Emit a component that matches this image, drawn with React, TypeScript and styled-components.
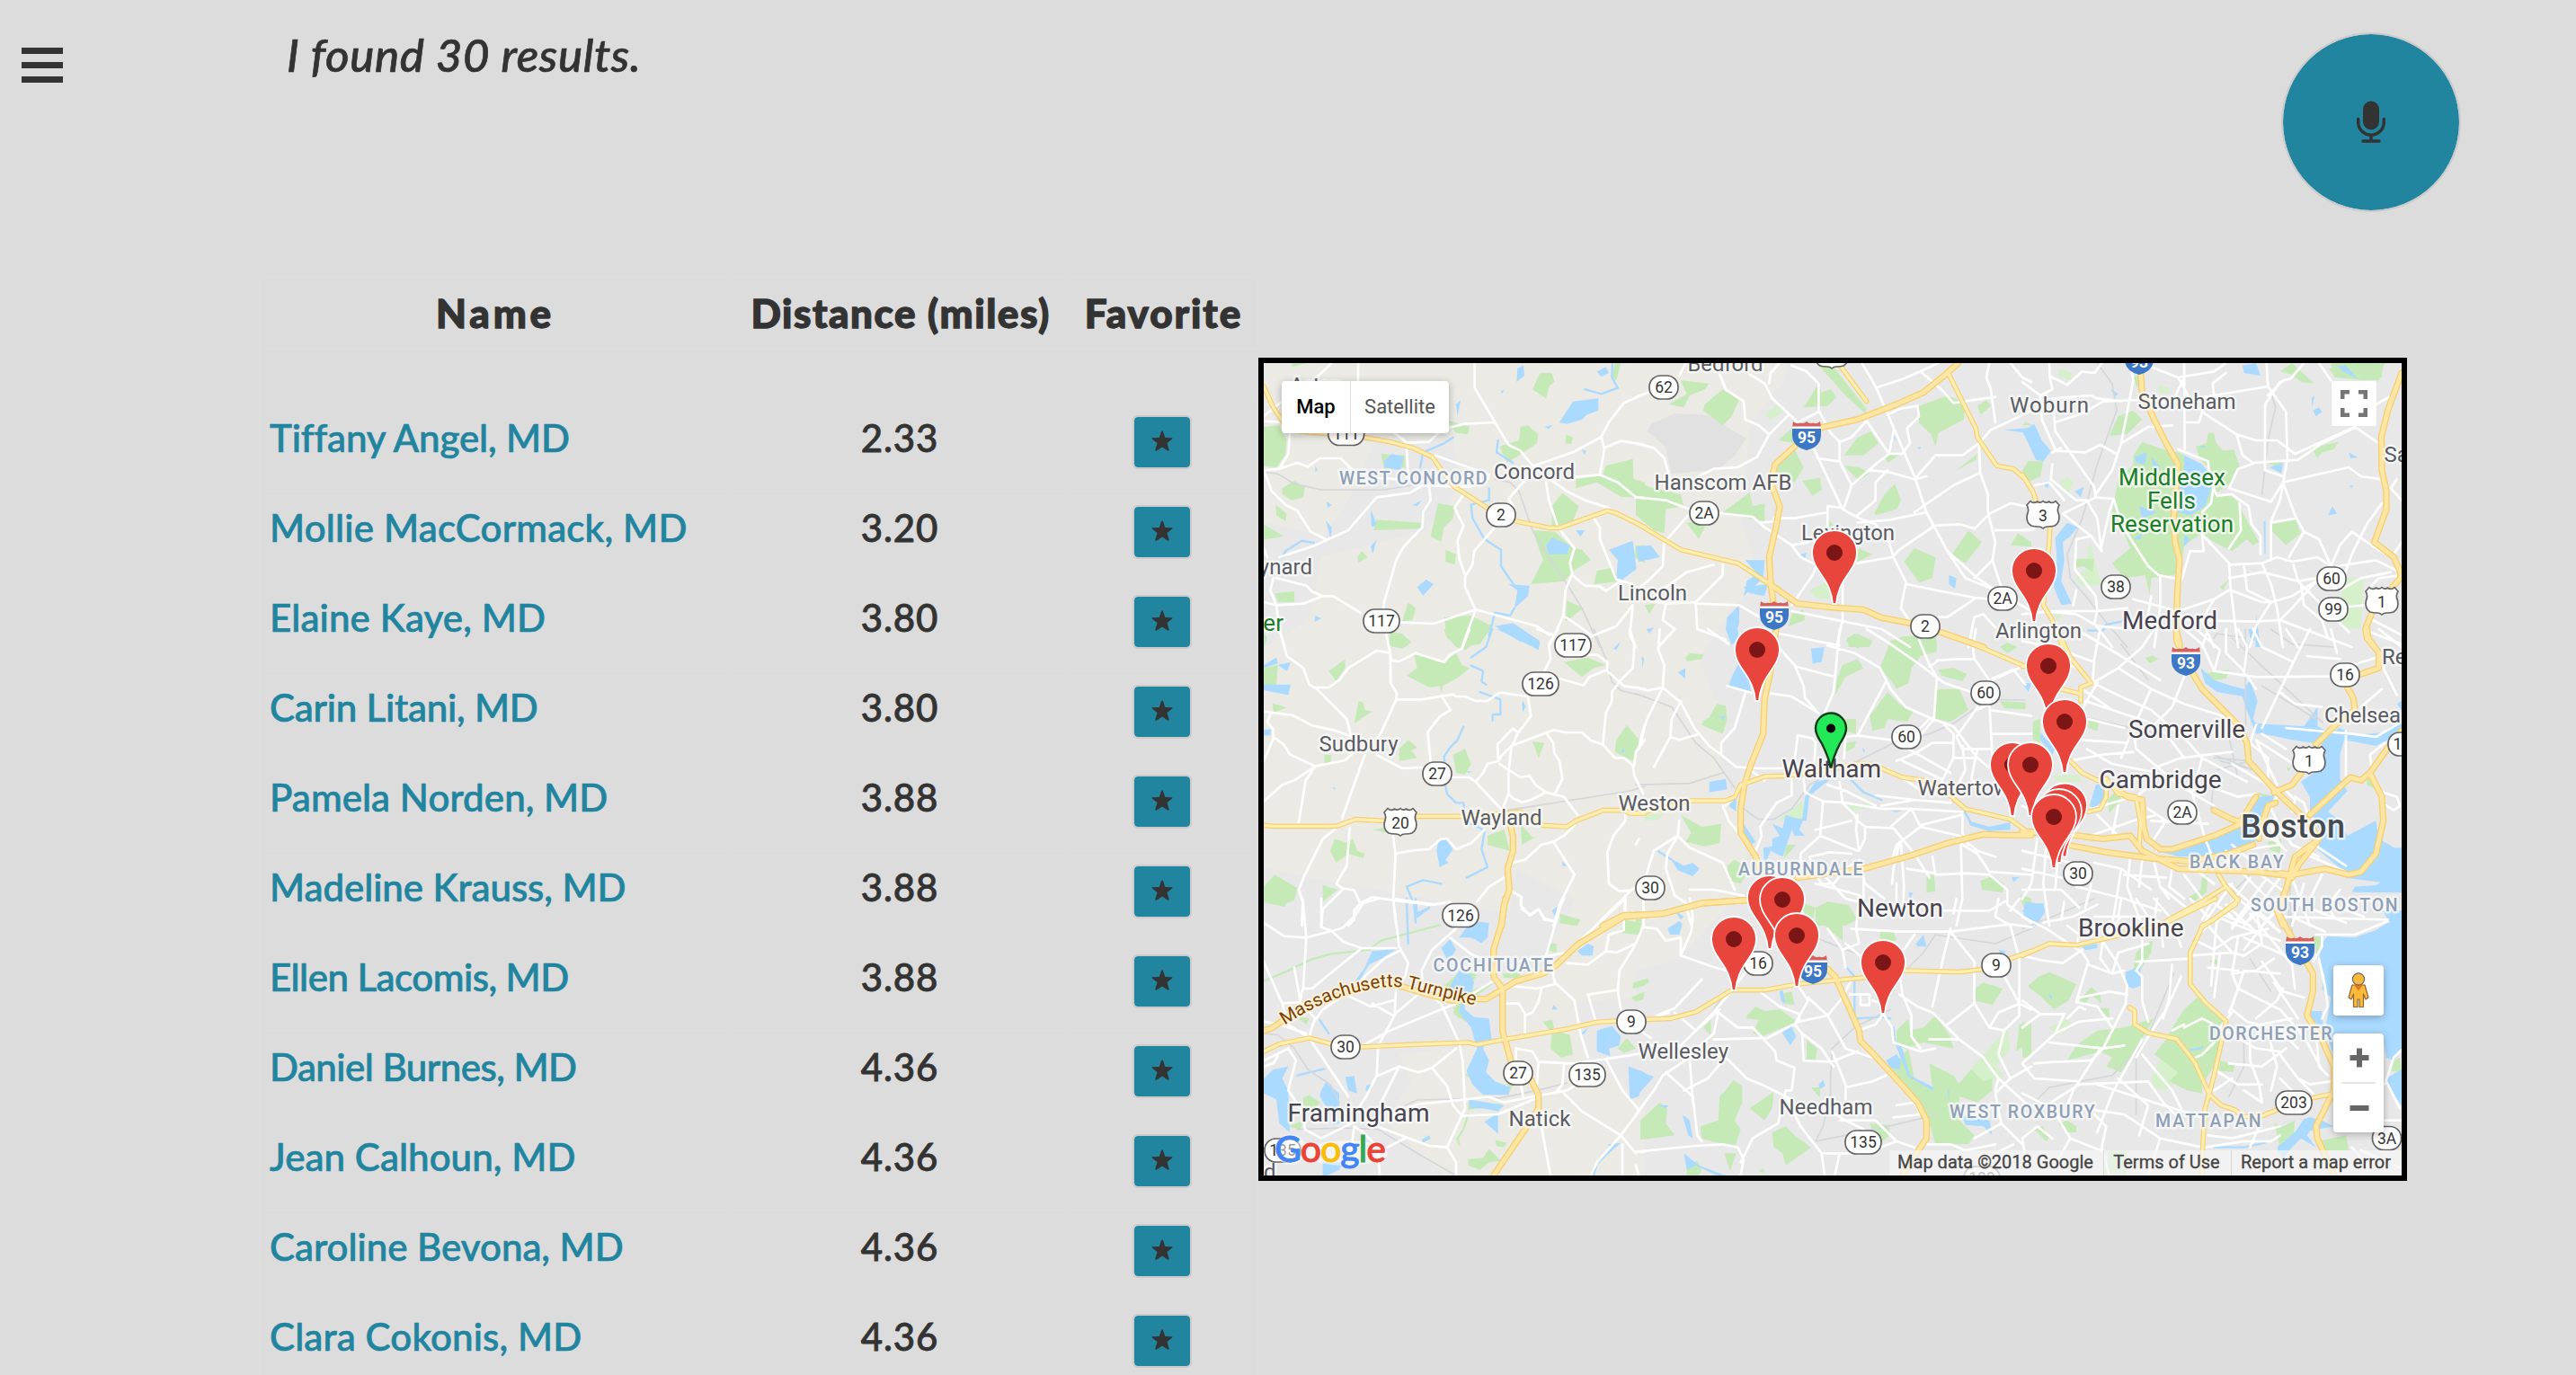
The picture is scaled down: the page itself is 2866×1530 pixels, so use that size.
import React from "react";
import styled, { createGlobalStyle } from "styled-components";

const GlobalStyle = createGlobalStyle`
  *, *::before, *::after { box-sizing: border-box; }
  body { margin: 0; background: #dcdcdc; color: #333; font-family: Lato, sans-serif; }
`;

const teal = "#2185a0";
const ink = "#333333";

/* ---------- page shell ---------- */

const Page = styled.div`
  height: 1530px;
  overflow: hidden;
  background: #dcdcdc;
`;

const Header = styled.header`
  display: flex;
  align-items: flex-start;
  height: 308px;
  padding: 36px 128px 0 24px;
`;

const MenuButton = styled.button`
  display: flex;
  flex-direction: column;
  gap: 9px;
  width: 46px;
  padding: 17px 0 0;
  border: 0;
  background: none;
`;

const MenuBar = styled.span`
  height: 7px;
  background: ${ink};
`;

const Prompt = styled.h1`
  flex: 1;
  margin: -6px 0 0 249px;
  font-size: 51px;
  line-height: 62px;
  font-style: italic;
  font-weight: 500;
  letter-spacing: 0.6px;
  color: ${ink};
  -webkit-text-stroke: 0.7px ${ink};
`;

const MicButton = styled.button`
  display: flex;
  align-items: center;
  justify-content: center;
  width: 200px;
  height: 200px;
  padding: 0;
  border: 2px solid #cbcbcb;
  border-radius: 50%;
  background: ${teal};
  background-clip: padding-box;
`;

const Main = styled.main`
  display: flex;
  align-items: flex-start;
  padding-left: 288px;
`;

/* ---------- results table ---------- */

const Table = styled.div`
  display: flex;
  flex-direction: column;
  width: 1112px;
  border-top: 1px solid #dedede;
  border-left: 1px solid #dedede;
`;

const Row = styled.div<{ $height: number }>`
  display: grid;
  grid-template-columns: 526px 376px 1fr;
  height: ${(p) => p.$height}px;
`;

const Cell = styled.div<{ $align?: string }>`
  display: flex;
  align-items: center;
  justify-content: ${(p) => p.$align ?? "center"};
  border-right: 1px solid #dedede;
  border-bottom: 1px solid #dedede;
`;

const HeadText = styled.span<{ $track: number }>`
  padding: 0 1px 2px 0;
  font-size: 44px;
  line-height: 60px;
  font-weight: 900;
  letter-spacing: ${(p) => p.$track}px;
  color: ${ink};
  -webkit-text-stroke: 1.3px ${ink};
`;

const NameLink = styled.a<{ $track: number }>`
  padding: 0 0 20px 11px;
  font-size: 42px;
  line-height: 52px;
  font-weight: 500;
  letter-spacing: ${(p) => p.$track}px;
  color: ${teal};
  -webkit-text-stroke: 0.7px ${teal};
`;

const Miles = styled.span`
  padding: 0 3px 20px 0;
  font-size: 42px;
  line-height: 52px;
  font-weight: 500;
  letter-spacing: 0.9px;
  color: ${ink};
  -webkit-text-stroke: 0.8px ${ink};
`;

const StarButton = styled.button`
  display: flex;
  align-items: center;
  justify-content: center;
  width: 66px;
  height: 60px;
  margin: 0 4px 10px 0;
  padding: 0 0 2px;
  border: 2px solid #cbcbcb;
  border-radius: 6px;
  background: ${teal};
  background-clip: padding-box;
`;

const doctors = [
  { name: "Tiffany Angel, MD", miles: "2.33", track: -0.1 },
  { name: "Mollie MacCormack, MD", miles: "3.20", track: 0.2 },
  { name: "Elaine Kaye, MD", miles: "3.80", track: 0.16 },
  { name: "Carin Litani, MD", miles: "3.80", track: -0.2 },
  { name: "Pamela Norden, MD", miles: "3.88", track: 0.08 },
  { name: "Madeline Krauss, MD", miles: "3.88", track: -0.05 },
  { name: "Ellen Lacomis, MD", miles: "3.88", track: -0.5 },
  { name: "Daniel Burnes, MD", miles: "4.36", track: -0.5 },
  { name: "Jean Calhoun, MD", miles: "4.36", track: 0.08 },
  { name: "Caroline Bevona, MD", miles: "4.36", track: 0 },
  { name: "Clara Cokonis, MD", miles: "4.36", track: 0.16 },
];

const StarIcon = () => (
  <svg width="24" height="23" viewBox="0 0 22 21" fill={ink}>
    <path d="M11 .3Q11.500 .3 12 1.400L14 7.300 20.800 7.500Q22.200 7.700 21.200 8.700L16 12.900 18 19.600Q18.200 21.200 16.900 20.700L11 16.900 5.100 20.700Q3.800 21.200 4 19.600L6 12.900 .8 8.700Q-.2 7.700 1.200 7.500L8 7.300 10 1.400Q10.500 .3 11 .3z" />
  </svg>
);

const MicIcon = () => (
  <svg width="32" height="48" viewBox="0 0 32 48" fill="none">
    <rect x="7" y="0.500" width="18" height="32" rx="9" fill={ink} />
    <path d="M1.700 20.500V24a14.300 14.300 0 0 0 28.600 0v-3.500M16 38.500v6M7 45h18" stroke={ink} strokeWidth="3.500" strokeLinecap="round" />
  </svg>
);

/* ---------- map ---------- */

const MapFrame = styled.section`
  position: relative;
  width: 1278px;
  height: 916px;
  margin-top: 90px;
  border: 6px solid #000;
  overflow: hidden;
  font-family: Roboto, sans-serif;
`;

const MapCanvas = styled.svg`
  display: block;
  width: 1266px;
  height: 904px;
  background: #e8e8e8;
`;

type Tile = {
  x: number;
  y: number;
  green: string;
  light?: string;
  greenway?: string;
  water: string;
  river?: string;
  rail: string;
  minor: string;
  major: string;
  highway: string;
};

/* Each tile is drawn in its own 1320-unit wide space, three units to a pixel. */
const tiles: Tile[] = [
  {
    x: 1390, y: 390,
    green: "M48,255L100,250 L125,300 L120,350 L90,390 L48,385z M440,345L520,350 520,390 450,400z M110,460L150,435 185,455 180,490 140,500 110,480z M88,515L125,545 120,570 90,550z M48,580L115,620 48,632z M630,510L685,520 680,560 650,590 640,640 605,620z M415,600L425,565 575,575 570,595z M360,690L375,670 395,690 365,708z M655,665L690,680 685,715 655,705z M665,235L735,255 730,280 690,275z M970,75L1010,75 1018,105 1000,120 990,160 945,130z M905,255L930,250 965,280 960,310 900,350 860,375 835,320 900,300z M1058,280L1080,290 1075,312 1055,310z M1090,430L1180,415 1190,385 1280,362 1282,430 1320,440 1320,492 1240,488 1160,440 1090,460z M1010,520L1045,475 1100,520 1080,570 1010,590z M945,600L1020,605 1080,660 1110,665 1140,700 1090,730 1050,770 940,780 980,700z M1160,735L1210,725 1240,770 1150,780z M530,840L555,860 545,900 510,905z M470,935L540,970 520,990 470,985z M650,890L740,885 810,920 770,980 700,990 660,960z M85,810L150,805 150,840 95,840z M1060,835L1115,860 1055,905z M1290,650L1320,650 1320,710 1285,690z M48,940L60,960 48,990z M140,42L190,42 145,55z M1220,42L1240,42 1225,100 1210,90z",
    water: "M450,370L475,345 515,355 505,400 450,390z M1035,240L1080,170 1165,160 1165,200 1125,215 1110,230 1060,245z M990,650L1010,625 1070,650 1060,680 1000,680z M1200,665L1280,635 1292,730 1245,765 1225,760 1230,700z M560,790L590,765 615,780 580,818z M865,780L935,785 930,820 885,860 895,800z M895,60L915,50 918,85 892,105z M1160,70L1190,55 1200,75 1175,88z M690,180L705,165 695,220z M405,530L425,580 408,590z M1090,600L1120,600 1105,622z M820,920L880,910 970,970 960,990 900,970z M220,385L228,400 220,405z M258,505L275,515 262,525z M255,568L275,590 272,630z M545,515L575,500 560,520z M405,655L425,630 412,680z M220,885L240,895 218,905z M1108,330L1125,335 1118,348z M840,135L852,132 842,145z M985,255L1012,248 1000,262z",
    river: "M740,515L745,560 785,630 840,665 840,720 885,785 M1212,42L1210,90 1230,125 1175,145 1120,130 M110,690L120,670 175,635 215,642 M830,300L825,340 880,375 M885,860L870,885 820,875 800,950 M800,460L800,500 740,515 M570,390L580,340 650,310 680,290",
    rail: "M48,405L95,412 150,445 240,465 450,465 600,440 M820,430L870,440 900,470 945,600 1000,690 1060,780 1110,860 1170,990",
    minor: "M48,400L100,395 160,375 195,388 235,360 305,360 340,395 420,425 500,430 M48,400L75,470 120,515 160,535 205,605 255,630 M100,395L130,345 135,276 M100,690L130,680 220,650 330,600 425,490 535,475 580,450 680,455 740,455 800,425 M600,455L605,500 580,540 578,590 515,655 490,700 450,840 448,862 M715,480L685,525 715,585 695,635 700,690 720,750 720,790 755,865 M820,590L750,670 745,715 720,755 M504,908L615,912 755,865 830,885 960,920 1000,950 M755,865L710,990 M752,42L752,125 820,240 865,315 905,335 950,390 M664,258L720,245 820,240 M950,385L1080,340 1175,288 1200,240 1250,175 1320,145 M1175,288L1185,330 1170,415 1090,422 M1185,325L1240,302 1320,315 M1170,415L1230,440 1290,490 1320,492 M950,390L1060,470 1120,500 1200,525 M990,440L1000,500 1030,590 1085,660 1070,710 1078,745 1055,800 1048,885 1000,990 M950,400L865,495 885,525 M1150,560L1170,590 1170,630 1225,765 1280,780 M1078,750L1120,785 1170,788 1190,802 1240,770 M1280,850L1225,920 1140,955 M1280,850L1270,950 1290,990 M1048,885L1100,920 1140,950 M620,350L800,415 M525,330L530,410 M485,276L525,308 600,305 630,276 M48,235L108,240 M80,760L70,800 90,850 180,845 245,820 280,820 370,875 M90,760L190,785 210,805 245,820 M48,840L90,850 100,930 118,990 M60,690L48,660 M275,42L230,85 M363,42L363,102 M48,220L108,170",
    major: "M48,120L80,190 120,250 170,270 230,275 385,290 470,305 545,325 610,355 645,405 685,455 800,530 M890,570L1000,592 1035,592 1195,535 1225,543 1320,590",
    highway: "",
  },
  {
    x: 1820, y: 390,
    green: "M110,180L170,145 150,100 245,110 230,130 180,150 160,190z M230,180L290,130 345,165 320,220 290,250 225,200z M610,50L660,55 770,195 765,210 700,150z M560,190L610,110 620,140 650,130 670,155 640,185z M475,300L520,260 530,310z M490,360L530,330 560,390 530,440 480,410 460,400z M555,435L615,425 620,465 590,485z M695,350L740,290 785,270 810,310 760,350z M695,385L750,390 780,410 745,435z M945,185L1040,150 1100,175 1095,230 1010,275 1000,320 985,280 945,240z M795,545L830,480 865,445 885,500 870,530 800,550z M830,350L885,345 840,375z M1070,400L1140,345 1135,365z M0,440L60,460 150,480 160,520 100,530 95,610 60,600 0,550z M290,540L380,475 390,520 430,510 430,570 300,545z M170,575L240,570 210,630z M895,705L930,660 1000,690 990,760 945,775z M1055,680L1110,600 1155,640 1100,710z M740,660L790,680 740,705z M640,560L660,585 640,590z M705,960L740,945 790,970 780,990 710,990z M520,880L560,865 565,900 510,920z M1250,650L1275,610 1320,640 1320,655z M1140,185L1170,165 1185,185 1150,215z M30,850L65,845 45,880z M940,990L1000,930 1005,990z",
    light: "M430,215L480,175 500,200 450,230z M580,800L640,770 650,830 600,825z",
    water: "M365,700L430,700 425,760 360,820 370,770 405,745z M305,890L345,850 345,910 320,985 300,930z M0,655L50,650 80,690 10,705z M1045,750L1070,760 1065,795 1045,780z M550,680L570,675 565,695z M1230,265L1320,258 1320,290 1300,275z M35,930L60,925 45,945z M860,280L870,300 862,295z M938,325L952,320 948,330z M360,790L440,780 430,820 380,810z",
    rail: "",
    minor: "M0,155L42,140 M280,80L300,130 360,170 365,230 410,250 445,280 M165,45L145,85 M380,80L430,110 455,160 525,225 540,240 M445,110L450,75 480,42 M445,280L510,215 M445,280L405,355 340,390 260,395 210,420 M520,50L570,70 610,110 610,200 650,275 680,305 M540,240L610,205 M755,42L800,120 840,210 930,420 970,540 1040,670 1100,760 1200,800 M680,305L720,290 770,235 835,330 845,345 890,345 M680,305L680,370 605,360 M595,330L690,530 745,560 800,580 845,640 860,690 905,780 M680,370L720,450 695,525 640,520 640,585 M720,450L800,380 845,345 860,270 M740,550L800,500 800,440 840,400 M780,400L840,405 930,430 1000,350 1090,350 1145,310 M890,345L915,310 905,260 945,220 940,185 880,195 840,215 M800,125L890,95 950,70 1010,42 M950,70L1020,130 1060,175 1200,155 M1180,42L1170,90 1185,130 1200,240 M1145,310L1185,265 1240,240 1320,200 M1145,315L1150,410 1175,480 1175,540 1200,640 1190,700 1220,790 M970,540L850,565 740,575 M640,540L530,560 460,560 M990,585L1080,580 1130,595 1180,545 1250,510 1305,520 M930,430L970,420 M990,590L880,665 855,690 740,710 M930,540L1060,450 1145,410 M0,490L100,500 180,530 M278,543L390,555 430,590 520,650 550,690 590,710 640,710 M0,310L60,325 95,360 120,450 M520,650L575,640 M520,850L590,750 610,700 M690,780L690,900 670,990 M420,575L470,570 M180,545L95,640 90,720 40,770 0,800 M260,715L170,740 100,790 50,835 M290,715L290,750 200,840 100,845 50,835 M200,845L205,930 300,965 M200,845L345,850 430,900 M100,845L90,900 130,930 75,990 M480,945L680,985 M520,870L620,890 820,930 915,990 M900,780L885,860 915,905 M905,780L1000,800 1130,825 1180,830 M1040,670L1140,760 1200,800 1320,870 M1130,830L1040,890 1010,890 M1200,600L1320,600 M1190,700L1130,760 M1110,990L1130,890 1160,880 1200,925 M1250,42L1290,90 1320,105",
    major: "M685,55L770,170 M0,575L150,665 340,710 440,775 M1045,80L1135,260 1140,290 1205,385 1260,395 1300,430 1320,465",
    highway: "M615,258L740,230 870,180 960,140 1040,75 1075,42 M530,320L465,380 450,440 480,520 470,580 445,690 450,780 460,850 M440,775L540,845 660,858 760,865 820,892 915,910 M1015,940L1160,990",
  },
  {
    x: 2250, y: 390,
    green: "M400,305L470,330 520,340 560,360 600,380 640,450 650,490 690,480 725,510 735,540 790,640 770,650 750,630 700,670 640,640 600,610 540,650 530,740 500,750 430,760 425,815 410,750 340,760 300,710 360,660 340,610 300,540 320,430 370,380 370,350z M620,275L640,275 645,305 670,335 705,330 725,385 700,440 640,480 630,400 590,360 580,320 615,310z M370,200L400,230 350,280 290,285 320,220z M20,370L70,370 60,420 20,440 0,400z M1020,60L1200,42 1200,90 1140,100 1050,90z M900,42L975,110 930,105 900,80 860,70z M965,325L1055,305 1040,330 1000,340 985,360z M830,580L910,560 930,610 880,650 830,600z M820,375L870,370 860,395z M180,695L240,695 235,740 205,720 180,725z M0,250L10,240 40,250z M660,790L690,765 670,800z M390,80L385,130 370,90z M1030,42L1210,42 1190,100 1040,90z",
    light: "M120,60L170,75 160,100 120,85z M455,115L490,125 490,145 455,140z M125,440L150,420 170,440 150,480z M1080,760L1140,760 1130,930 1080,925 1040,890z M100,860L135,870 120,905z M215,660L230,645 240,700 265,780 200,790 180,760 220,720z",
    water: "M0,270L40,245 65,300 95,335 70,370 45,365 20,310z M375,355L415,340 410,380 380,375z M540,350L600,380 640,430 610,520 560,550 520,540 500,470 540,420z M430,355L440,400 460,390z M60,440L90,435 85,460z M175,470L205,455 195,490z M110,625L150,575 185,590 160,620 135,640 140,700 130,770 165,845 130,850 105,790 115,700z M735,50L780,42 795,85 740,75z M1050,50L1080,50 1120,95 1070,70z M970,200L990,190 1000,205 980,220z M965,160L975,150 968,190z M1020,550L1035,520 1050,545z M1090,340L1120,358 1095,360z M825,390L870,375 865,410z M295,130L320,145 310,155z M540,615L560,630 540,655z M390,520L450,540 400,560z M370,630L400,610 395,630z M780,880L795,990 778,990z M805,570L812,570 812,680 808,680z M1090,452L1105,450 1100,458z M595,318L615,320 600,325z",
    river: "M220,935L270,935 280,915 330,905 350,890",
    rail: "M250,42L300,110 315,200 250,380 200,560 150,680 160,760 220,830 290,920 350,990 M830,140L845,190 820,300 800,480 M640,960L650,945 740,960",
    minor: "M90,42L92,90 100,130 60,150 65,230 110,330 M0,105L60,150 M92,85L150,115 200,70 240,75 265,42 M360,42L370,100 330,310 300,400 245,480 M100,160L230,150 250,160 330,170 M105,200L110,270 180,370 240,455 245,490 M110,240L200,210 270,170 400,165 M110,335L210,340 260,315 315,345 M330,310L420,255 500,250 M130,325L100,340 M245,490L305,495 330,580 420,720 455,750 530,765 M245,490L135,545 230,620 265,670 250,560 215,500 M305,495L290,540 265,650 M230,620L180,630 175,730 245,820 250,870 M100,380L95,430 180,500 215,500 M40,450L90,440 140,500 M0,600L40,595 M400,100L390,165 500,175 540,90 M430,55L520,90 640,70 680,42 M520,90L570,180 600,200 M540,42L542,330 M470,175L640,150 820,120 M640,150L635,110 680,75 M815,42L820,120 880,205 885,360 860,500 830,570 830,700 M860,105L810,180 810,400 870,420 M600,205L715,280 780,300 850,300 910,345 1110,255 1190,310 1195,350 M600,205L590,240 540,240 M715,280L735,350 770,375 920,365 1000,310 1110,258 M770,378L720,395 690,460 830,505 M830,505L870,440 1090,390 1130,420 1200,430 M520,330L620,370 625,430 650,485 700,480 755,520 765,580 795,620 795,680 M640,440L630,510 600,540 M725,510L730,600 690,660 M600,615L605,670 560,670 530,770 M600,615L690,710 695,790 720,990 M690,715L800,710 850,690 900,705 985,690 1030,720 M870,440L910,550 940,605 990,630 1040,740 M940,605L890,690 M830,575L915,560 M1030,720L1060,650 1100,605 1180,660 1250,700 M1200,510L1150,580 1100,680 1060,790 M905,715L920,770 1000,850 1090,940 M690,760L800,740 880,760 920,770 980,760 M800,710L830,780 850,860 870,990 M740,720L750,800 830,840 900,820 980,770 M695,800L800,840 830,840 780,920 760,990 M460,750L460,860 440,990 M0,880L100,870 250,870 350,860 M370,830L520,870 640,830 690,800 M430,820L420,880 M640,830L600,900 640,990 M550,900L780,905 860,900 1020,960 M250,870L240,910 300,990 M70,870L180,880 250,920 360,930 M180,800L170,850 M1150,800L1190,760 1266,750 M1060,800L1130,760 1230,740 M930,780L940,850 1000,900 1020,960 M990,760L900,860 860,900 M1090,855L1140,850 M1020,960L1100,990 M1180,180L1235,150 M990,42L1030,100 M820,150L870,100 895,95 940,42 M1250,430L1230,460 1266,500 M1266,640L1240,680 M1050,720L1180,700 1260,740 M1170,900L1266,950 M1160,940L1266,980",
    major: "M0,415L35,470 45,500 M92,590L90,640 70,850 100,900 135,990",
    highway: "M395,80L400,140 440,230 480,310 520,380 510,500 505,560 510,640 525,700 518,800 513,920 515,970 525,990 M1266,75L1220,200 1198,290 1200,400 1215,470 1215,530 1175,640 1240,690 1262,740 1262,760 1235,790 M1165,880L1145,930 1150,960 1175,990",
  },
  {
    x: 1390, y: 700,
    green: "M470,10L510,15 540,45 510,65 465,55z M650,0L730,0 790,20 720,70 690,60 655,20z M550,85L600,95 650,110 690,80 710,120 735,130 700,160 645,190 642,215 636,190 600,195 525,155 560,130z M265,140L320,100 320,130 290,175z M365,240L380,245 385,270 410,275 350,315z M78,248L125,262 80,280z M500,400L530,370 560,395 540,405 560,430 500,440z M680,420L720,400 740,450 720,485 690,480z M250,420L275,420 270,450 250,445z M270,740L285,700 330,715 345,700 360,740 385,750 380,765 330,750 290,780z M410,670L470,660 480,685z M795,690L850,670 870,740 795,720z M905,650L950,700 960,690 910,720z M945,375L985,380 965,430z M1260,320L1300,370 1280,440 1220,410 1225,370z M1050,110L1130,95 1190,120 1150,130 1110,160z M48,860L85,820 160,865 150,905 110,920 48,910z M245,855L295,870 245,910z M48,130L95,120 90,190 48,185z M1040,955L1100,970 1080,990 1035,980z M1210,570L1240,590z",
    water: "M825,0L880,5 970,45 965,70 890,30z M48,120L90,95 95,115 48,130z M95,120L138,110 125,140z M48,185L138,185 130,220 48,205z M910,250L918,245 915,275z M630,710L655,700 680,735 655,770 665,780 635,795 625,740z M48,335L72,335 70,355 48,355z M1215,65L1240,40 1225,70z M1240,410L1250,395 1250,415z M1045,775L1058,790 1045,792z M275,528L288,530 285,537z M725,475L745,475 730,480z M1015,935L1028,925 1022,960z M910,250L914,240 922,258 914,278z",
    river: "M810,0L790,60 740,95 M740,122L780,140 775,175 790,185 M770,210L838,235 838,285 812,285 812,305 M715,325L695,370 670,395 650,425 655,470 M655,525L660,550 690,580 715,580 720,640 780,670 M785,675L775,735 795,795 725,830 M640,850L580,838 525,860 550,920 555,980 M560,950L600,930",
    rail: "M1150,0L1190,100 1210,175 1240,205 1320,225 M860,605L1270,540 1320,525",
    minor: "M100,0L125,90 180,130 200,185 225,200 325,300 340,360 M225,195L265,195 300,170 330,130 425,72 470,80 475,105 500,108 555,80 650,110 670,85 710,65 735,0 M457,18L470,80 472,180 492,215 490,235 440,345 425,370 M490,235L575,235 680,218 690,225 720,225 755,240 795,240 835,212 930,225 940,290 895,350 880,385 M640,222L672,270 635,292 595,345 605,440 M48,275L145,288 210,322 285,338 345,360 M70,285L60,310 80,335 80,360 115,385 135,418 220,458 320,438 345,415 M48,440L80,365 M48,575L110,520 150,505 220,458 188,505 165,645 M425,420L510,465 575,462 M678,495L735,495 755,510 840,600 M755,510L780,480 795,450 832,440 840,425 875,390 940,365 1015,337 1055,345 1110,345 1140,372 1180,385 1220,430 1250,430 1280,455 1285,490 1315,550 M832,440L828,385 880,332 895,345 M835,450L905,495 935,490 955,520 990,545 1050,560 1095,620 M990,345L1015,380 1018,415 1035,440 1045,500 1020,550 M875,390L865,480 865,550 845,600 M865,550L880,565 910,578 940,570 990,545 M1180,385L1190,280 1210,240 1210,210 1240,170 1280,130 1285,50 1270,0 M1035,165L1115,188 1135,160 1195,135 M1110,85L1160,85 1195,110 1195,140 1250,190 1320,200 M985,140L1005,100 1000,50 1030,0 M960,0L1010,18 M385,420L310,630 M290,665L245,700 185,820 165,870 178,910 175,990 M335,665L325,790 290,850 310,865 350,872 370,915 M370,915L410,895 480,905 600,920 650,915 M370,915L350,940 350,970 330,990 M310,870L245,935 240,990 M480,690L488,755 480,905 490,990 M488,750L550,738 600,735 640,700 660,700 690,735 740,715 785,670 M760,910L800,860 850,830 M880,780L920,770 975,720 1015,710 1050,690 1085,655 M1015,710L1085,820 1035,920 1015,990 M1255,620L1255,640 1215,690 1195,745 1200,850 1235,875 1275,872 1290,860 M1275,872L1160,985 M1255,890L1255,960 M875,875L910,895 905,920 935,955 965,935 985,965 1020,975 M48,980L60,990 M1305,390L1320,320 M1285,455L1290,410 1320,370",
    major: "M48,655L80,658 290,658 355,635 450,640 M560,625L710,625 860,615 900,610 950,630 980,655 1060,660 1090,640 1180,605 1250,605 1270,615 1320,615",
    highway: "M870,650L880,690 880,740 862,800 868,870 850,920 842,990 M1180,990L1250,955 1320,955",
  },
  {
    x: 1820, y: 700,
    green: "M165,95L180,80 225,85 220,100 170,108z M270,250L300,255 305,300 290,350 220,320 225,305 245,295z M700,40L730,15 790,40 740,65z M670,170L690,120 740,100 760,130 700,160 665,220z M815,130L850,40 890,25 1000,20 1005,75 950,90 920,130 910,180 870,200 850,170z M780,290L840,210 880,250 930,270 905,310 840,300 830,330 790,340z M1000,200L1080,200 1110,270 1050,310 1000,300z M1010,135L1060,130 1105,150 1090,175 1020,155z M1215,60L1240,45 1275,60 1240,80z M700,300L735,300 735,350 700,340z M700,380L735,375 730,395 700,410z M500,720L535,720 495,765z M150,620L220,660 285,650 280,715 230,725 165,710 185,680z M305,790L330,770 380,800 350,850 310,840z M970,825L995,820 1000,875 970,880z M1150,840L1190,825 1230,850 1225,880 1155,870z M600,930L640,910 700,925 740,970 700,990 600,990z M1215,240L1300,245 1300,268 1230,265z M0,380L10,360 8,400z M0,965L20,970 10,990 0,990z M1285,885L1320,900 1320,930 1290,920z",
    light: "M475,640L560,570 560,635z M710,590L790,580 795,595 710,610z M30,620L90,615 80,635 30,640z",
    water: "M300,0L340,0 345,40 320,50z M320,160L345,110 375,160 385,210 310,190z M585,65L630,60 620,110 590,115z M140,145L165,130 165,165z M245,510L300,500 305,535 245,545z M310,590L335,560 335,610z M360,650L400,710 385,720 360,690z M425,730L455,725 455,700 480,690 455,650 490,665 500,620 530,630 560,635 545,670 565,690 530,690 520,670 490,760 450,740 430,790z M115,765L160,790 190,780 213,800 190,825 140,805z M565,560L600,510 650,500 600,540 578,560 570,640 555,640z M1110,640L1180,660 1250,645 1250,670 1180,675 1115,655z M280,290L300,290 290,305z M850,605L885,605 870,612z M910,880L925,880 915,900z M1290,940L1320,930 1320,975z M1255,828L1280,828 1260,845z M20,90L28,100 22,130z M755,395L765,405 760,412z M130,940L160,960 150,970z",
    river: "M75,742L120,770 M720,505L760,545 820,570 M1098,610L1115,640",
    rail: "M0,215L120,260 200,380 260,430 330,530 M0,520L180,515 290,480 M360,600L410,635 460,635 520,600 580,520 650,480 740,440 860,380 980,350 1060,315 1140,260 M1190,235L1300,237",
    minor: "M80,0L75,70 95,120 90,195 40,295 20,350 10,400 M0,195L40,205 90,195 150,245 195,330 245,390 285,420 335,460 410,465 490,465 M150,240L120,300 115,360 145,370 210,350 M115,360L60,460 M285,420L285,380 330,330 365,215 M305,190L385,212 M450,215L520,225 610,280 M480,65L530,120 560,190 565,230 600,270 M240,0L310,50 M535,125L665,160 660,210 630,280 M680,0L665,160 M640,55L730,80 815,130 850,200 900,260 990,300 1060,325 1140,430 M770,0L850,50 950,120 1030,180 1120,210 M945,35L980,120 1005,160 995,300 930,380 M740,355L850,370 M740,355L835,175 M980,300L950,330 M1005,105L1070,100 1130,100 1180,170 M980,125L1010,105 M1130,100L1125,60 1135,0 M1190,165L1260,135 1300,185 M1300,120L1190,170 M740,355L700,360 695,430 M540,355L535,400 525,470 M540,355L590,365 600,380 595,450 M380,470L430,505 M520,500L520,555 470,580 415,660 420,690 400,740 M560,500L565,545 625,575 700,580 820,600 920,600 1090,610 M625,575L615,690 550,750 550,790 M680,510L690,580 730,620 740,640 765,660 860,665 930,750 980,830 M640,520L700,540 800,590 M615,690L740,740 M740,620L735,670 745,740 765,700 765,660 M820,590L930,570 1050,580 M800,555L930,570 M920,600L950,660 870,720 855,770 M950,655L1090,620 M850,660L920,600 M1090,625L1090,680 1110,720 M950,660L1080,690 1140,740 1200,760 M1060,700L1140,750 1180,810 1320,820 M885,710L895,860 890,960 M880,710L860,800 855,850 M990,760L1000,820 1100,815 1180,820 M905,800L1000,815 M1085,720L1090,900 1070,990 M1180,820L1240,870 1240,920 1320,980 M1030,320L1060,350 1060,430 1000,550 M1060,380L990,380 940,410 870,440 M910,400L1050,480 M890,440L1020,500 M840,465L970,550 M1060,430L1140,430 1200,480 M1090,390L1100,470 1050,570 M1140,270L1180,250 1190,420 M1185,350L1320,350 M1140,260L1070,360 1090,400 1190,400 M1180,270L1320,290 M1140,400L1120,500 1170,560 M745,770L765,850 830,900 M600,850L680,870 750,890 M580,790L620,850 660,850 700,800 730,780 M590,800L580,760 650,745 720,750 M635,830L700,900 740,910 M10,700L0,720 M145,640L140,690 180,730 290,780 330,870 M140,690L105,750 100,800 130,890 175,920 M140,690L60,740 35,820 M25,905L25,990 M180,870L260,870 360,890 M170,930L185,990 M290,590L310,640 360,700 400,740 M300,590L340,530 M1030,940L1180,940 1240,905 M760,840L760,900 M870,850L870,920 M720,640L600,670",
    major: "M0,615L80,600 180,573 300,573 330,560 350,520 380,510 430,492 500,490 600,475 740,450 790,452 890,495 960,505 1030,540 1100,600 1250,635 1300,672 M1015,10L1150,60 1300,125",
    highway: "M468,0L450,140 430,230 425,350 385,450 362,520 350,600 350,680 400,760 420,820 M0,955L90,950 220,915 370,905 M540,830L760,800 920,755 1040,715 1160,685 1250,688 1320,688",
  },
  {
    x: 2250, y: 700,
    green: "M605,150L690,135 680,165 640,170z M410,95L435,88 455,100 425,115z M220,300L255,310 250,340 220,330z M285,570L320,530 330,570 290,615z M820,710L865,700 860,750 825,735z M550,900L595,870 600,830 620,820 615,880 570,910z M1150,500L1170,500 1190,540 1150,520z M35,310L60,300 60,380 35,370z M885,460L897,465 885,475z M780,545L830,555 800,560z",
    light: "M100,490L190,485 195,510 120,510z",
    water: "M1060,340L1075,365 1060,420 1060,500 1085,540 1020,610 1060,640 1085,690 1180,640 1190,700 1266,745 1266,880 1100,878 1110,860 1180,855 1195,845 1080,830 1050,790 985,735 1000,690 960,600 960,560 930,510 985,470 1010,430 1000,380 1030,340z M785,315L940,325 985,260 985,325 1030,345 1060,330 1110,355 1200,345 1266,300 1266,340 1220,370 1180,390 1075,370 1000,385 900,370 830,355 795,350z M595,130L640,170 700,190 740,200 760,170 785,240 770,300 800,345 780,350 745,260 735,225 650,210 610,180z M755,0L785,0 775,40 760,30z M455,740L540,735 610,705 720,655 760,600 790,560 840,555 830,590 800,610 790,700 720,740 620,760 520,760z M245,520L285,510 280,560 240,600 225,590z M60,345L110,400 100,420 60,370z M0,180L30,180 20,210z M10,910L70,920 75,945 45,990 10,970z M1210,940L1266,940 1266,990 1230,990z M1130,735L1266,730 1266,880 1150,800z M1266,240L1250,250 1266,270z",
    rail: "M745,0L745,370 M330,50L420,170 M640,430L760,440 650,470 M100,270L500,360 M700,30L1000,310 M800,190L980,300 M690,360L720,500 M640,500L630,600 M830,0L900,50 1040,60 M700,880L760,820 M895,860L885,990 M880,850L895,990 M640,420L770,470 660,440",
    minor: "M0,40L100,60 240,110 M180,0L330,90 460,170 M260,0L240,100 235,180 320,130 400,60 440,0 M100,90L200,140 235,180 M235,180L340,230 430,270 520,350 M200,200L300,270 420,310 480,350 M320,130L430,200 540,250 700,300 M430,200L370,330 330,430 M540,160L500,260 430,330 M250,180L180,300 M210,240L330,280 M220,300L340,330 M200,370L350,380 M215,400L300,450 450,480 M160,440L260,420 370,410 M370,340L380,400 450,460 520,520 640,590 M450,460L530,430 700,410 M480,350L540,430 M520,340L600,430 750,510 M540,0L600,50 640,140 M580,0L660,70 640,140 M620,0L600,60 M680,0L680,80 740,140 M720,0L750,60 740,150 M640,140L780,160 1030,158 M745,150L780,200 M905,110L800,330 M770,0L800,60 905,110 960,0 M1030,0L1050,80 M950,90L1060,100 M880,0L920,60 M640,530L720,560 780,550 M560,520L610,700 630,750 M700,450L820,520 M600,430L570,540 M780,370L850,520 M780,370L920,460 M800,350L880,400 M780,320L760,380 820,430 820,520 M860,210L910,250 1000,260 M880,330L1100,350 1180,360 1266,310 M1080,340L1080,490 M1170,490L1160,420 1210,380 M1100,120L1200,90 M1190,100L1250,220 M1190,0L1266,60 M1130,260L1200,200 M1190,540L1250,560 1260,590 1240,605 1200,580 M910,560L940,580 950,610 M880,540L910,570 900,610 M850,560L830,600 850,640 M780,670L850,710 880,740 M820,640L860,720 M720,740L860,720 M680,740L690,780 M860,660L900,720 990,760 M700,720L770,780 M920,740L1080,810 M960,710L1080,790 M450,740L440,720 400,680 M0,590L100,640 160,680 M200,700L370,640 450,620 M230,600L370,560 M250,620L330,700 M320,590L300,690 M380,560L430,520 M430,640L620,650 M420,600L480,640 440,700 M0,740L200,790 M50,700L30,850 0,900 M80,720L70,850 90,990 M120,740L110,870 M0,800L130,830 M0,870L130,870 190,930 M240,780L330,800 300,990 M180,860L340,900 460,940 M360,760L350,860 400,990 M400,770L390,860 M440,780L460,860 490,900 M340,820L480,830 M460,860L560,940 M330,800L430,870 M230,850L210,930 M500,800L490,860 540,900 M540,820L600,900 M560,790L640,850 M240,960L440,960 M450,900L440,990 M620,900L700,960 M600,990L700,850 M650,980L760,830 M700,990L810,840 M740,990L860,830 M690,850L840,990 M740,820L840,920 M660,950L760,990 M780,810L880,880 M880,900L1080,980 M940,850L900,990 M900,830L960,990 M1000,820L960,900 M1060,870L1000,950 M800,990L880,910",
    major: "M160,95L230,180 195,195 195,240 M115,0L135,40 160,95 M130,200L190,215 M0,125L15,120 M160,440L200,480 250,505 280,500 320,550 380,560 395,650 390,720 M280,500L280,560 260,600 220,610 M655,820L680,860 600,910 480,975 M680,860L720,905 640,970 600,990",
    highway: "M513,0L525,50 M570,150L600,200 720,320 750,380 755,440 850,545 930,620 960,650 990,700 M960,620L1095,495 1130,505 1160,480 1225,390 1266,340 M1160,480L1200,560 1205,640 1180,750 1130,810 1090,820 1010,800 900,820 860,815 M0,675L60,680 170,688 270,700 360,690 400,740 520,800 660,805 780,810 900,825 M150,720L280,745 430,765 560,775 690,750 770,720 M310,530L350,560 400,570 405,660 415,700 460,735 500,735 640,690 730,650 M730,640L780,560 M640,605L700,635 730,645 M845,580L820,590 790,680 790,700 M840,545L900,520 930,480 M980,385L1050,315 1110,270 1105,230 1085,195 M1130,150L1190,130 1190,80 1155,30 1150,0 M990,700L910,760 880,870 850,940 870,990 M990,700L920,790 900,830",
  },
  {
    x: 1390, y: 1000,
    green: "M48,0L125,0 120,28 48,12z M640,300L700,245 760,250 730,310 700,400 680,380 700,330 660,310z M680,360L720,380 720,410 690,390z M730,310L820,280 750,330z M1035,50L1105,70 1095,90 1040,80z M1245,70L1310,80 1300,120 1245,115z M980,410L1010,405 1020,440 1070,455 1080,520 1040,530 1005,500 1010,450z M1000,150L1025,150 1025,180 990,170z M845,250L900,245 910,265 850,265z M180,665L200,655 235,680 210,710 180,690z M730,680L850,685 770,700 730,705z M820,805L860,815 850,830 825,825z M730,870L780,865 800,835 840,875 800,880 770,905 730,890z M1280,280L1320,270 1320,290 1280,300z M1275,330L1320,310 1315,335 1290,345z M1230,500L1260,465 1290,500 1250,515z M720,590L750,540 760,500 740,600z M1305,740L1320,750 1320,800 1305,790z M150,390L200,400 190,420z M130,760L180,740 170,770z M860,600L880,620 865,655z",
    greenway: "M48,275L120,245 200,205 270,185 400,170 440,140 635,88 M730,720L715,770 695,800 700,820",
    water: "M640,165L670,135 690,170 665,210z M700,130L740,75 800,80 795,130 775,148 740,130z M665,300L700,240 740,255 750,280 740,320 715,330 720,370 750,395 800,400 810,480 790,470 780,500 800,540 790,580 820,610 870,630 865,655 780,655 745,620 725,575 760,500 740,430 700,380 710,320z M730,670L850,690 830,710 780,700 740,700z M785,745L830,715 830,785z M1095,175L1130,150 1150,160 1145,190 1110,190z M350,280L385,230 410,175 490,168 440,200 400,220 360,285z M48,600L80,570 130,560 110,600 130,640 135,780 100,750 90,670 48,650z M240,640L255,612 300,650 300,700 260,700 235,660z M320,595L350,592 360,650 330,640z M390,625L405,618 400,645 388,640z M575,805L600,790 605,800 580,815z M1160,440L1210,425 1240,460 1235,490 1200,500 1205,525 1160,510z M1265,560L1320,580 1300,660 1270,670z M245,880L310,880 300,905 260,924 245,924z M1015,355L1030,370 1010,370z M1010,40L1030,30 1020,60z M1200,820L1240,815 1200,850z M275,740L330,740 280,755z M1100,455L1130,430 1120,450z",
    river: "M525,0L530,150 M555,0L560,60 600,30 M235,405L265,450 M160,590L250,568 M1200,845L1160,885 1150,920",
    rail: "M48,450L95,455 150,500 195,570 270,620 300,680 M520,690L560,672 720,668 840,665 960,640 1060,615 M160,770L320,765 430,770 560,850 690,924",
    minor: "M48,80L115,125 190,130 275,108 310,98 350,60 380,15 430,0 M240,0L240,95 275,108 315,145 375,165 490,165 M178,0L190,130 180,290 170,340 M48,210L110,350 170,345 M180,300L210,300 245,270 375,165 M480,0L500,160 530,215 520,260 490,295 485,390 430,490 425,590 390,660 350,720 M500,175L450,200 390,255 360,290 M480,0L620,20 670,10 M690,100L610,170 575,240 580,300 640,350 700,480 712,540 720,700 660,830 M670,130L740,185 820,215 M740,320L830,265 M900,210L1000,190 1060,180 M370,495L470,440 640,370 740,330 M480,390L575,310 M410,350L480,390 M150,230L170,340 M210,420L245,370 320,320 405,360 480,340 M48,410L100,420 190,450 M170,345L220,400 205,440 200,465 330,660 M110,350L130,420 200,465 M130,500L155,540 130,640 180,715 185,770 240,800 350,745 M48,540L90,520 130,500 M48,560L80,550 95,525 M430,590L500,560 565,580 610,565 690,500 M500,560L440,680 M610,565L660,625 680,690 710,725 830,720 950,670 M520,700L570,685 800,662 850,680 950,660 1060,640 1110,610 M350,760L380,780 430,830 435,924 M350,760L340,840 M400,750L520,795 600,825 660,830 690,880 690,924 M460,830L520,800 M48,924L90,880 M1040,640L1110,710 1240,790 1290,850 M975,760L1005,924 M1240,790L1300,710 1320,680 M1240,790L1160,880 1140,924 M1245,820L1245,924 M1290,845L1320,845 M890,500L890,540 910,640 915,665 M890,500L945,510 965,545 1080,550 1190,535 1320,515 M965,545L960,620 M1050,555L1045,620 1020,650 M1190,535L1245,640 1300,705 M1130,530L1105,450 1085,340 1020,280 1010,240 M1020,285L960,300 860,290 M975,300L965,345 945,380 920,390 920,450 M855,350L900,350 920,385 M990,190L1040,20 1050,0 M1060,180L1200,50 1255,0 M1255,0L1250,70 1250,105 1200,120 1190,175 1130,220 1060,215 M1190,175L1225,180 1290,150 1315,90 M1285,160L1235,240 1230,310 1240,370 M1230,305L1130,320 1155,405 M905,0L910,35 940,55 965,35 985,70 1020,75",
    major: "M48,510L100,485 200,465 275,485 M370,495L540,487 730,480 760,487 850,470 1060,435 1160,412 1225,408",
    highway: "M48,440L70,435 100,415 130,395 220,350 350,305 440,285 500,290 600,320 680,340 740,335 790,335 850,300 890,275 980,250 1020,225 1100,150 1250,60 1320,55 M855,0L840,90 815,170 815,260 845,300 845,440 875,550 M940,605L965,655 965,700 920,770 815,924",
  },
  {
    x: 1820, y: 1000,
    green: "M620,70L640,10 710,20 740,70 690,90 690,140 630,90z M815,112L860,110 870,140 815,145z M370,390L400,360 430,375 480,370 540,410 420,460 390,450 410,405 370,400z M225,430L250,405 250,455z M570,470L605,500 600,540 570,540z M480,320L520,310 530,355 490,350z M870,440L910,400 915,440 960,430 1000,390 1050,460 1060,500 960,480 900,500 870,490z M300,640L325,605 355,625 355,680 330,740 350,770 330,830 220,800 215,760 275,740 280,660z M15,740L80,680 105,700 100,750 130,790 50,800 15,805z M380,700L460,645 455,700 430,740z M455,780L500,760 530,790 585,830 500,890 490,850 460,830z M585,630L615,630 615,665z M295,850L335,850 315,910z M850,560L910,500 930,600 990,630 980,550 1060,590 1080,620 1080,740 1130,790 1110,820 1000,820 970,720 900,630z M1060,640L1120,570 1160,610 1190,600 1190,640 1140,680 1080,660z M1130,300L1160,280 1225,300 1190,355 1130,340z M1280,420L1320,410 1320,470 1270,510z M0,280L40,265 45,280 0,300z M170,890L205,875 220,905 210,924 170,924z M410,910L425,900 430,915z M0,65L15,70 15,110 0,110z M780,750L845,755 850,790 810,820z M545,10L570,60 590,70 600,30z",
    light: "M1090,600L1170,510 1240,430 1250,500 1200,560 1230,590 1160,620 1110,620z",
    water: "M105,100L145,75 155,85 145,120 115,120z M490,435L520,425 535,460 515,490 490,450z M835,540L870,520 885,540 880,570 850,565z M860,470L890,500 915,590 995,630 990,640 910,595z M0,570L60,595 10,650 0,640z M155,720L180,740 190,800 175,790z M935,150L960,120 970,160 940,160z M610,620L625,605 632,625 615,635z M160,850L210,890 300,924 270,924 200,890 170,905z M75,690L110,690 100,700z M480,310L490,305 500,350 485,340z M1090,725L1180,740 1190,790 1160,760 1100,755z M1210,170L1235,175 1225,200z M1040,640L1046,640 1044,680z",
    river: "M700,225L730,260 730,400 820,395 850,400 M860,430L865,480",
    rail: "M600,130L780,200 M1000,120L960,180 900,240 M1000,120L1200,150 1320,100 M650,690L650,600 655,500 730,430 850,370 M600,810L800,770 1010,720 M600,810L625,760 650,650 M160,480L240,400 300,310",
    minor: "M25,0L25,95 70,100 100,140 150,130 150,190 250,225 300,240 M180,0L190,60 185,110 150,190 M70,390L130,365 220,270 M130,380L200,440 280,370 M80,390L110,380 M0,430L50,465 M50,490L150,490 240,400 310,320 370,240 M275,380L260,450 170,530 M275,380L340,430 390,430 465,510 470,540 530,565 M260,470L440,465 545,410 640,390 M545,295L575,340 530,420 555,450 560,540 650,545 740,510 M575,330L640,390 700,500 790,530 M400,300L480,360 545,385 545,410 M555,450L620,500 660,560 M640,390L690,330 720,270 M300,530L370,600 430,625 500,660 560,700 M300,530L240,600 160,640 M0,720L60,640 90,590 180,530 290,530 M100,580L190,660 205,790 220,810 M180,530L190,680 M530,565L520,640 500,640 475,750 390,800 350,880 M0,845L200,825 290,820 340,830 360,870 350,924 M500,660L550,760 620,850 720,850 M720,850L760,770 700,740 630,700 M620,850L630,924 M665,920L680,850 M655,510L700,620 700,670 M700,630L790,610 835,590 M870,690L930,680 M680,740L800,740 870,810 M930,680L950,720 860,730 M815,830L870,810 930,830 M970,820L1050,820 1100,840 1200,820 M740,440L800,420 825,385 M825,385L855,430 860,480 950,510 1000,500 M880,250L890,320 920,390 920,460 950,500 M880,320L940,360 990,380 1080,470 1160,530 1210,600 1320,700 M990,360L1030,180 1050,100 M880,190L930,120 M720,100L880,110 1050,110 1250,85 1320,95 M745,0L735,100 745,150 690,170 640,100 M690,170L700,230 M700,150L760,200 M1050,110L1130,210 1130,350 1040,420 M1130,350L1180,430 1210,380 1280,350 1230,260 M1210,0L1200,60 1250,90 1280,200 1280,350 1320,370 M1180,430L1230,440 1210,520 1250,600 1200,650 1220,750 1290,820 M1080,470L980,470 M1280,350L1280,390 1230,440 M1130,800L1220,750 M1210,600L1200,640 M1250,600L1320,560 M1070,0L1060,50 M1280,0L1250,40 M715,320L780,320 780,355 750,355 750,320z M790,340L820,350 M0,890L10,924 M1260,820L1200,850",
    major: "M35,403L115,400 200,378 320,305 430,305 540,285 640,275 770,263 M900,240L1080,245 1160,235 M1250,200L1320,175",
    highway: "M640,235L665,260 710,360 745,440 750,475 790,515 850,580 940,680 970,740 970,800 930,860 890,924 M0,55L90,50 220,15 370,5",
  },
  {
    x: 2250, y: 1000,
    green: "M20,290L55,260 90,245 180,285 155,340 105,370 60,325 20,295z M190,340L230,295 260,320 265,350 230,320 210,350z M500,430L540,370 590,325 640,370 680,410 665,500 640,560 600,620 600,650 550,640 490,610 520,580 440,520 480,470z M150,540L180,490 250,440 340,430 440,400 380,500 330,580 280,560 300,530 260,510z M0,410L30,430 30,530 0,530z M380,180L410,150 435,140 430,180 390,245 370,240z M625,210L640,200 660,210 650,222z M840,750L910,780 870,870z M985,810L1080,790 1090,840 1010,840z M970,125L1000,125 985,205z M660,540L710,555 705,578 655,575z M245,365L290,365 290,400 270,380z M120,750L150,740 180,760 180,780 150,780z M40,770L70,760 90,800 80,810z M290,840L350,840 350,924 270,924z M1235,545L1260,530 1266,580 1230,575z M1040,800L1080,790 1060,820z M870,760L910,740 905,800 850,850z",
    light: "M430,600L480,500 530,450 580,470 590,520 560,560 480,640 440,630z M90,430L150,400 165,430 110,460z",
    water: "M1005,140L1020,125 1110,130 1180,105 1220,80 1266,90 1266,510 1240,540 1215,530 1206,480 1038,520 1010,440 1030,330 1000,300 1010,260 990,200z M960,375L1000,375 1005,440 965,400z M1215,600L1266,570 1266,690 1230,640z M345,245L395,225 395,290 370,300 345,290z M5,20L70,15 75,45 45,90 5,60z M200,160L250,150 250,165 210,172z M850,830L910,780 940,735 960,730 1000,740 1040,760 960,775 950,790 980,830 930,800 900,830 870,870z M88,318L100,325 95,340z M1205,42L1220,42 1225,80z",
    river: "M640,830L740,830 810,815 M560,505L600,498",
    rail: "M240,0L100,60 0,100 M505,250L410,480 300,590 90,630 30,690 M760,200L830,310 M740,430L740,560 690,660 M895,0L900,130 M380,520L380,720",
    minor: "M0,60L80,100 200,180 220,210 180,345 M0,190L60,205 135,215 200,170 M130,70L140,10 M70,80L170,60 250,20 M180,160L190,120 150,90 M260,130L320,220 350,290 345,350 270,500 M220,220L300,250 340,240 M300,250L320,180 420,150 M270,130L260,200 290,240 M400,120L400,210 380,240 400,260 400,340 420,410 M380,210L480,205 560,200 M500,220L490,330 470,400 M530,260L480,370 420,460 380,530 M400,470L300,650 250,780 M180,345L190,330 290,310 350,320 M180,345L250,360 300,430 M150,400L190,360 210,370 M0,340L60,385 140,385 110,450 0,550 M60,385L0,430 M110,450L190,410 300,400 M90,480L270,500 340,490 M0,550L40,600 190,610 260,500 M40,550L100,545 230,540 270,500 M0,650L80,690 190,620 420,610 M190,610L170,640 150,690 M400,520L500,640 530,700 M420,610L470,680 540,750 M320,600L420,690 390,790 M250,620L440,680 600,730 M240,720L280,760 265,830 290,924 M200,700L340,720 460,800 600,830 M100,700L160,800 260,840 M100,800L50,760 0,800 M540,430L600,400 660,430 700,380 M500,440L540,420 M640,480L600,520 580,530 M660,430L780,500 860,510 M700,370L750,410 860,440 920,500 M690,380L720,300 700,250 720,130 M720,300L860,370 940,460 M780,400L850,340 870,300 M840,280L920,400 M740,430L900,400 M760,430L760,540 790,620 800,680 740,640 M820,450L850,560 830,640 M880,500L800,560 690,550 M640,570L720,620 800,620 M860,520L920,600 960,620 1030,610 M640,640L700,600 M860,600L900,640 M940,460L1000,570 M620,90L700,180 740,190 M560,190L700,180 M600,110L650,60 720,90 860,140 M650,60L630,290 M580,140L640,170 700,130 820,100 M620,230L720,240 M660,180L640,330 M700,250L780,240 840,200 M740,190L800,150 780,30 M740,240L860,250 M760,50L900,220 910,300 M850,30L740,170 M800,210L870,310 940,330 M740,130L880,190 M740,240L700,360 M440,0L500,70 530,160 M380,0L420,60 460,80 M460,80L470,160 M330,0L320,60 M330,60L280,120 M560,0L620,60 M640,0L600,70 M680,20L800,130 M720,0L860,110 M780,0L700,100 M840,0L760,70 M990,200L1010,290 1020,360 1000,400 M970,210L1000,160 1000,120 M980,440L990,560 1020,590 M920,600L970,650 M610,830L740,810 830,810 860,790 M620,790L700,800 860,760 M1215,610L1230,640 1260,700 M1206,740L1266,740 M1210,620L1240,530 1266,505 M1100,830L1160,900 M1130,840L1266,900 M980,120L1110,120 1220,75 M860,60L1220,70 M1000,0L1040,60 M1060,30L1140,60 M900,60L1010,110 M460,800L420,924 M160,800L120,870 M0,800L10,870 M790,760L760,830",
    major: "M0,190L90,150 180,155 400,105 490,75 645,0 M720,0L710,20 600,95 560,180 560,285 610,345 680,408 640,590 610,700 602,830 600,924 M358,363L375,375 375,420 420,448 515,468 575,545 625,655 665,690 710,705 735,728 800,725 850,705 M358,363L358,364 M970,665L1040,650",
    highway: "M850,40L900,130 M950,215L970,250 970,310 950,390 1000,470 1040,560 1040,640 980,760 985,800 1040,924",
  },
];

const rural = [
  "M1406,404L1990,404 1985,425 1947,470 1937,577 1960,650 1930,673 1890,733 1920,810 1913,847 1933,900 1946,950 1930,1000 1867,1067 1820,1080 1723,1060 1753,1000 1687,967 1680,1017 1603,1003 1457,977 1406,965z",
  "M1557,1173L1670,1160 1667,1083 1723,1075 1790,1055 1820,1050 1820,1110 1753,1115 1767,1173 1790,1190 1830,1230 1830,1308 1607,1308 1540,1247 1570,1205z",
];
const suburb = "M1530,490L1617,490 1623,543 1587,590 1470,620 1457,690 1406,720 1406,580 1473,597 1500,557z";
const airfield = "M1863,460L1900,462 1943,488 1930,507 1910,523 1860,527 1853,497 1833,480 1837,472z";

const Area = styled.path<{ $fill: string }>`
  fill: ${(p) => p.$fill};
`;

const Line = styled.path<{ $color: string; $w: number }>`
  fill: none;
  stroke: ${(p) => p.$color};
  stroke-width: ${(p) => p.$w};
  stroke-linejoin: round;
  stroke-linecap: round;
`;

type LayerKey = Exclude<keyof Tile, "x" | "y">;

const Layer = ({ part, fill, color, w = 0 }: { part: LayerKey; fill?: string; color?: string; w?: number }) => (
  <>
    {tiles.map((t) => (
      <g key={`${t.x}-${t.y}`} transform={`translate(${t.x} ${t.y}) scale(0.33333)`}>
        {fill ? <Area d={t[part] || ""} $fill={fill} /> : <Line d={t[part] || ""} $color={color ?? "#fff"} $w={w} />}
      </g>
    ))}
  </>
);

/* ---------- labels ---------- */

const tones = {
  town: { size: 24, weight: 400, color: "#5a5c64", gap: 0 },
  city: { size: 28, weight: 400, color: "#47434f", gap: 0 },
  metro: { size: 36, weight: 500, color: "#474b50", gap: 0 },
  area: { size: 19.5, weight: 500, color: "#8e9fb8", gap: 2.4 },
  park: { size: 26, weight: 400, color: "#1d7d28", gap: 0 },
};

const LabelText = styled.text<{ $tone: keyof typeof tones }>`
  font-size: ${(p) => tones[p.$tone].size}px;
  font-weight: ${(p) => tones[p.$tone].weight};
  letter-spacing: ${(p) => tones[p.$tone].gap}px;
  fill: ${(p) => tones[p.$tone].color};
  stroke: rgba(250, 250, 250, 0.75);
  stroke-width: 5px;
  stroke-linejoin: round;
  paint-order: stroke;
`;

type Label = [text: string, x: number, y: number, width: number | null, tone: keyof typeof tones];

const labels: Label[] = [
  ["Acton", 1435, 437, 58, "town"],
  ["WEST CONCORD", 1490, 538.500, 167, "area"],
  ["Concord", 1662, 533, 90, "town"],
  ["Maynard", 1367, 639, 93, "town"],
  ["River", 1370, 701.500, 58, "park"],
  ["Lincoln", 1800, 668, 77, "town"],
  ["Bedford", 1877.500, 413, 84, "town"],
  ["Hanscom AFB", 1840.500, 545, 153, "town"],
  ["Lexington", 2004, 601, 104, "town"],
  ["Woburn", 2236, 458.500, 88, "town"],
  ["Arlington", 2220, 710, 96, "town"],
  ["Stoneham", 2378.500, 454.500, 109, "town"],
  ["Middlesex", 2357, 540, 119, "park"],
  ["Fells", 2389, 566, 54, "park"],
  ["Reservation", 2348, 592, 137, "park"],
  ["Medford", 2361, 699.500, 106, "city"],
  ["Saugus", 2652.500, 513.500, null, "town"],
  ["Sudbury", 1467.500, 835.500, 88, "town"],
  ["Wayland", 1625.500, 918, 90, "town"],
  ["Weston", 1800.500, 901.500, 80, "town"],
  ["Waltham", 1982.500, 865, 110.500, "city"],
  ["Watertown", 2133.500, 885, null, "town"],
  ["AUBURNDALE", 1934, 974, 141, "area"],
  ["Newton", 2066, 1020, 96, "city"],
  ["Somerville", 2368, 821, 130, "city"],
  ["Cambridge", 2335.500, 876.500, 136, "city"],
  ["Boston", 2493, 932, 116, "metro"],
  ["BACK BAY", 2436, 965.500, 107, "area"],
  ["SOUTH BOSTON", 2504, 1013.500, 166, "area"],
  ["Chelsea", 2586, 803.500, 85, "town"],
  ["Revere", 2650, 738.500, null, "town"],
  ["COCHITUATE", 1594.500, 1080.500, 136, "area"],
  ["Framingham", 1432.500, 1247.500, 158, "city"],
  ["Natick", 1678.500, 1253, 69, "town"],
  ["d", 1406, 1312, null, "town"],
  ["Wellesley", 1822.500, 1178, 100.500, "town"],
  ["Needham", 1979.500, 1240, 104, "town"],
  ["WEST ROXBURY", 2169, 1243.500, 164, "area"],
  ["Brookline", 2312, 1041.500, 117.500, "city"],
  ["DORCHESTER", 2458, 1156.500, 139, "area"],
  ["MATTAPAN", 2398, 1253.500, 120, "area"],
];

const TurnpikeText = styled.text`
  font-size: 20.5px;
  fill: #7b3f06;
  stroke: rgba(255, 245, 220, 0.8);
  stroke-width: 4px;
  paint-order: stroke;
`;

/* ---------- road shields ---------- */

const ShieldText = styled.text<{ $light?: boolean }>`
  font-size: 17.500px;
  font-weight: ${(p) => (p.$light ? 700 : 400)};
  fill: ${(p) => (p.$light ? "#fff" : "#333")};
  text-anchor: middle;
`;

const pills: [string, number, number][] = [
  ["111", 1497.700, 482.500], ["2", 1670, 573], ["117", 1537, 691], ["117", 1750, 718],
  ["62", 1851, 431], ["2A", 1896, 571], ["2", 2142, 697], ["2A", 2228, 666],
  ["38", 2354, 653], ["60", 2594, 644], ["99", 2596, 678],
  ["126", 1714, 761], ["27", 1599, 861], ["126", 1625, 1018.500], ["30", 1836, 988],
  ["60", 2209, 771], ["60", 2121, 820], ["16", 2609, 751], ["2A", 2428, 904], ["30", 2312, 972],
  ["1A", 2673, 828], ["30", 1497, 1165], ["27", 1689, 1194], ["135", 1766, 1196], ["9", 1815, 1137],
  ["135", 1427, 1280], ["16", 1956, 1072], ["9", 2221, 1074], ["135", 2073, 1271], ["109", 2205, 1311],
  ["203", 2552, 1227], ["3A", 2655.500, 1266.500],
];

const usRoutes: [string, number, number][] = [["3", 2038, 394], ["3", 2273, 572], ["1", 2650, 668], ["20", 1558, 914], ["1", 2569, 845]];
const interstates: [string, number, number][] = [["95", 2010, 485], ["95", 1974, 685], ["93", 2380, 401], ["93", 2432, 736], ["95", 2017, 1079], ["93", 2559, 1058]];

const Pill = ({ text, x, y }: { text: string; x: number; y: number }) => {
  const w = text.length > 2 ? 40 : 32;
  return (
    <g transform={`translate(${x} ${y})`}>
      <rect x={-w / 2} y={-13} width={w} height={26} rx={12.5} fill="#fff" stroke="#646464" strokeWidth={1.7} />
      <ShieldText y={6.2}>{text}</ShieldText>
    </g>
  );
};

const UsRoute = ({ text, x, y }: { text: string; x: number; y: number }) => (
  <g transform={`translate(${x} ${y})`}>
    <path
      d="M-14,-14.500Q-10.500,-11 -6.500,-14Q-3,-11.500 0,-14.500Q3,-11.500 6.500,-14Q10.500,-11 14,-14.500L18,-10Q15,-5 17.500,0Q19.500,9 13,13Q10,14 5,14Q2,14 0,16Q-2,14 -5,14Q-10,14 -13,13Q-19.500,9 -17.500,0Q-15,-5 -18,-10z"
      fill="#fff" stroke="#646464" strokeWidth={1.7} strokeLinejoin="round"
    />
    <ShieldText y={7.5}>{text}</ShieldText>
  </g>
);

const Interstate = ({ text, x, y }: { text: string; x: number; y: number }) => (
  <g transform={`translate(${x} ${y})`}>
    <path d="M-15,-16Q-11,-12.500 -7,-14.500Q-3,-13 0,-16Q3,-13 7,-14.500Q11,-12.500 15,-16L16,-9.500H-16z" fill="#d5605f" />
    <rect x={-16} y={-10.500} width={32} height={3} fill="#fff" />
    <path d="M-16,-8H16V-1Q16,12 0,16Q-16,12 -16,-1z" fill="#3c78c6" />
    <ShieldText $light y={8}>{text}</ShieldText>
  </g>
);

/* ---------- markers ---------- */

const pins: [number, number][] = [
  [2041, 615], [2263, 635], [1955, 723], [2279, 741], [2297, 803], [2239, 851], [2259, 851],
  [2297, 896.500], [2291, 903], [2285, 909], [1969, 999], [1983, 1001], [2095, 1071], [1929, 1045], [1999, 1041],
];

const Pin = ({ x, y }: { x: number; y: number }) => (
  <g transform={`translate(${x} ${y})`}>
    <path d="M0,-25A25,25 0 0 1 25,0C25,9 20.500,16 15,24C8,34 3,43 2,57H-2C-3,43 -8,34 -15,24C-20.500,16 -25,9 -25,0A25,25 0 0 1 0,-25z" fill="#e8453c" stroke="#fff" strokeWidth={1.8} />
    <circle r={9} fill="#7c1515" />
  </g>
);

const HomePin = () => (
  <g transform="translate(2037 810.500)">
    <path d="M0,-17A17,17 0 0 1 17,0C17,7 13.500,11 10,17C6,25 2.500,32 .5,43H-.5C-2.500,32 -6,25 -10,17C-13.500,11 -17,7 -17,0A17,17 0 0 1 0,-17z" fill="#23e858" stroke="#0f3d1c" strokeWidth={2.4} />
    <circle r={5} fill="#000" />
  </g>
);

/* ---------- map controls (float over the map) ---------- */

const TypeSwitch = styled.div`
  position: absolute;
  top: 20px;
  left: 20px;
  display: flex;
  height: 58px;
  border-radius: 4px;
  background: #fff;
  box-shadow: 0 2px 8px rgba(0, 0, 0, 0.28);
`;

const TypeOption = styled.button<{ $active?: boolean; $width: number }>`
  width: ${(p) => p.$width}px;
  padding: 0 0 2px;
  border: 0;
  border-left: ${(p) => (p.$active ? "0" : "1px solid #e4e4e4")};
  background: none;
  font-family: Roboto, sans-serif;
  font-size: 22px;
  font-weight: ${(p) => (p.$active ? 500 : 400)};
  color: ${(p) => (p.$active ? "#000" : "#565656")};
`;

const FullscreenButton = styled.button`
  position: absolute;
  top: 20px;
  right: 28px;
  display: flex;
  align-items: center;
  justify-content: center;
  width: 50px;
  height: 50px;
  padding: 0;
  border: 0;
  border-radius: 2px;
  background: #fff;
`;

const SideControls = styled.div`
  position: absolute;
  right: 20px;
  bottom: 48px;
  display: flex;
  flex-direction: column;
  gap: 20px;
`;

const ControlBox = styled.div<{ $height: number }>`
  display: flex;
  flex-direction: column;
  align-items: center;
  justify-content: center;
  width: 56px;
  height: ${(p) => p.$height}px;
  border-radius: 4px;
  background: #fff;
  box-shadow: 0 2px 8px rgba(0, 0, 0, 0.28);
`;

const ZoomButton = styled.button`
  display: flex;
  flex: 1;
  align-items: center;
  justify-content: center;
  width: 38px;
  padding: 0 0 0 2px;
  border: 0;
  background: none;

  & + & { border-top: 2px solid #e4e4e4; }
`;

const Attribution = styled.footer`
  position: absolute;
  right: 0;
  bottom: 0;
  display: flex;
  height: 28px;
  font-size: 20px;
  line-height: 26px;
  color: #444;
  -webkit-text-stroke: 0.3px #444;
  background: rgba(245, 245, 245, 0.72);
`;

const Credit = styled.span<{ $width: number }>`
  width: ${(p) => p.$width}px;
  padding-right: 2px;
  text-align: center;
  white-space: nowrap;

  & + & { border-left: 1px solid #d8d8d8; }
`;

const LogoText = styled.text`
  font-family: Lato, sans-serif;
  font-size: 41px;
  font-weight: 500;
  stroke-width: 0.8px;
`;

const LogoHalo = styled.ellipse`
  fill: rgba(255, 255, 255, 0.5);
`;

const logoLetters: [string, string][] = [["G", "#4285f4"], ["o", "#ea4335"], ["o", "#fbbc05"], ["g", "#4285f4"], ["l", "#34a853"], ["e", "#ea4335"]];

const Pegman = () => (
  <svg width="24" height="40" viewBox="0 0 24 40" stroke="#8a6a34" strokeWidth="1.2">
    <path d="M5,14H19L23,28 20,30 17.500,24V38.500H13V30H11V38.500H6.500V24L4,30 1,28z" fill="#fbb93a" strokeLinejoin="round" />
    <path d="M7,14H17L12,20.500z" fill="#e07b1c" stroke="none" />
    <circle cx="12" cy="7.500" r="6.600" fill="#fbb93a" stroke="#666" />
  </svg>
);

const MapView = () => (
  <MapFrame>
    <MapCanvas viewBox="1406 404 1266 904">
      {rural.map((d) => <Area key={d} d={d} $fill="#ebeae5" />)}
      <Area d={suburb} $fill="#e8e8e8" />
      <Area d={airfield} $fill="#e1e1e1" />
      <Layer part="light" fill="#d6f0cc" />
      <Layer part="green" fill="#c6eab7" />
      <Layer part="greenway" color="#c6eab7" w={7} />
      <Layer part="water" fill="#aadaff" />
      <Layer part="river" color="#aadaff" w={7} />
      <Layer part="rail" color="#d4d7da" w={5} />
      <Layer part="minor" color="#ffffff" w={8} />
      <Layer part="major" color="#f5cf72" w={17} />
      <Layer part="highway" color="#f5cf72" w={22} />
      <Layer part="major" color="#ffeeb0" w={10} />
      <Layer part="highway" color="#ffe6a3" w={14} />
      {labels.map(([text, x, y, width, tone]) => (
        <LabelText key={text} x={x} y={y} $tone={tone} textLength={width ?? undefined}>{text}</LabelText>
      ))}
      <path id="turnpike" d="M1429,1141Q1478,1109 1520,1102Q1548,1094 1575,1102Q1605,1110 1660,1123" fill="none" />
      <TurnpikeText><textPath href="#turnpike">Massachusetts Turnpike</textPath></TurnpikeText>
      {pills.map(([text, x, y]) => <Pill key={`${x}-${y}`} text={text} x={x} y={y} />)}
      {usRoutes.map(([text, x, y]) => <UsRoute key={`${x}-${y}`} text={text} x={x} y={y} />)}
      {interstates.map(([text, x, y]) => <Interstate key={`${x}-${y}`} text={text} x={x} y={y} />)}
      <HomePin />
      {[...pins].sort((a, b) => a[1] - b[1]).map(([x, y]) => <Pin key={`${x}-${y}`} x={x} y={y} />)}
      <LogoHalo cx="1436" cy="1279" rx="17" ry="17" />
      <LogoHalo cx="1498" cy="1283" rx="46" ry="14" />
      <LogoText x="1418" y="1292.500" textLength="124">
        {logoLetters.map(([letter, color], i) => <tspan key={i} fill={color} stroke={color}>{letter}</tspan>)}
      </LogoText>
    </MapCanvas>

    <TypeSwitch>
      <TypeOption $active $width={76}>Map</TypeOption>
      <TypeOption $width={110}>Satellite</TypeOption>
    </TypeSwitch>

    <FullscreenButton>
      <svg width="30" height="30" viewBox="0 0 30 30" fill="none" stroke="#757575" strokeWidth="4.500">
        <path d="M2.250,10V2.250H10M20,2.250H27.750V10M27.750,20V27.750H20M10,27.750H2.250V20" />
      </svg>
    </FullscreenButton>

    <SideControls>
      <ControlBox $height={56}><Pegman /></ControlBox>
      <ControlBox $height={110}>
        <ZoomButton>
          <svg width="22" height="22" viewBox="0 0 22 22" stroke="#666" strokeWidth="6"><path d="M0.500,11H21.500M11,0.500V21.500" /></svg>
        </ZoomButton>
        <ZoomButton>
          <svg width="22" height="22" viewBox="0 0 22 22" stroke="#666" strokeWidth="6"><path d="M0.500,11H21.500" /></svg>
        </ZoomButton>
      </ControlBox>
    </SideControls>

    <Attribution>
      <Credit $width={238}>Map data ©2018 Google</Credit>
      <Credit $width={142}>Terms of Use</Credit>
      <Credit $width={190}>Report a map error</Credit>
    </Attribution>
  </MapFrame>
);

export default function App() {
  return (
    <Page>
      <GlobalStyle />
      <Header>
        <MenuButton aria-label="Menu"><MenuBar /><MenuBar /><MenuBar /></MenuButton>
        <Prompt>I found 30 results.</Prompt>
        <MicButton aria-label="Speak"><MicIcon /></MicButton>
      </Header>
      <Main>
        <Table>
          <Row $height={80}>
            <Cell><HeadText $track={3.8}>Name</HeadText></Cell>
            <Cell><HeadText $track={1.5}>Distance (miles)</HeadText></Cell>
            <Cell><HeadText $track={1.9}>Favorite</HeadText></Cell>
          </Row>
          <Row $height={58} />
          {doctors.map((d) => (
            <Row key={d.name} $height={100}>
              <Cell $align="flex-start"><NameLink $track={d.track}>{d.name}</NameLink></Cell>
              <Cell><Miles>{d.miles}</Miles></Cell>
              <Cell><StarButton aria-label="Favorite"><StarIcon /></StarButton></Cell>
            </Row>
          ))}
        </Table>
        <MapView />
      </Main>
    </Page>
  );
}
